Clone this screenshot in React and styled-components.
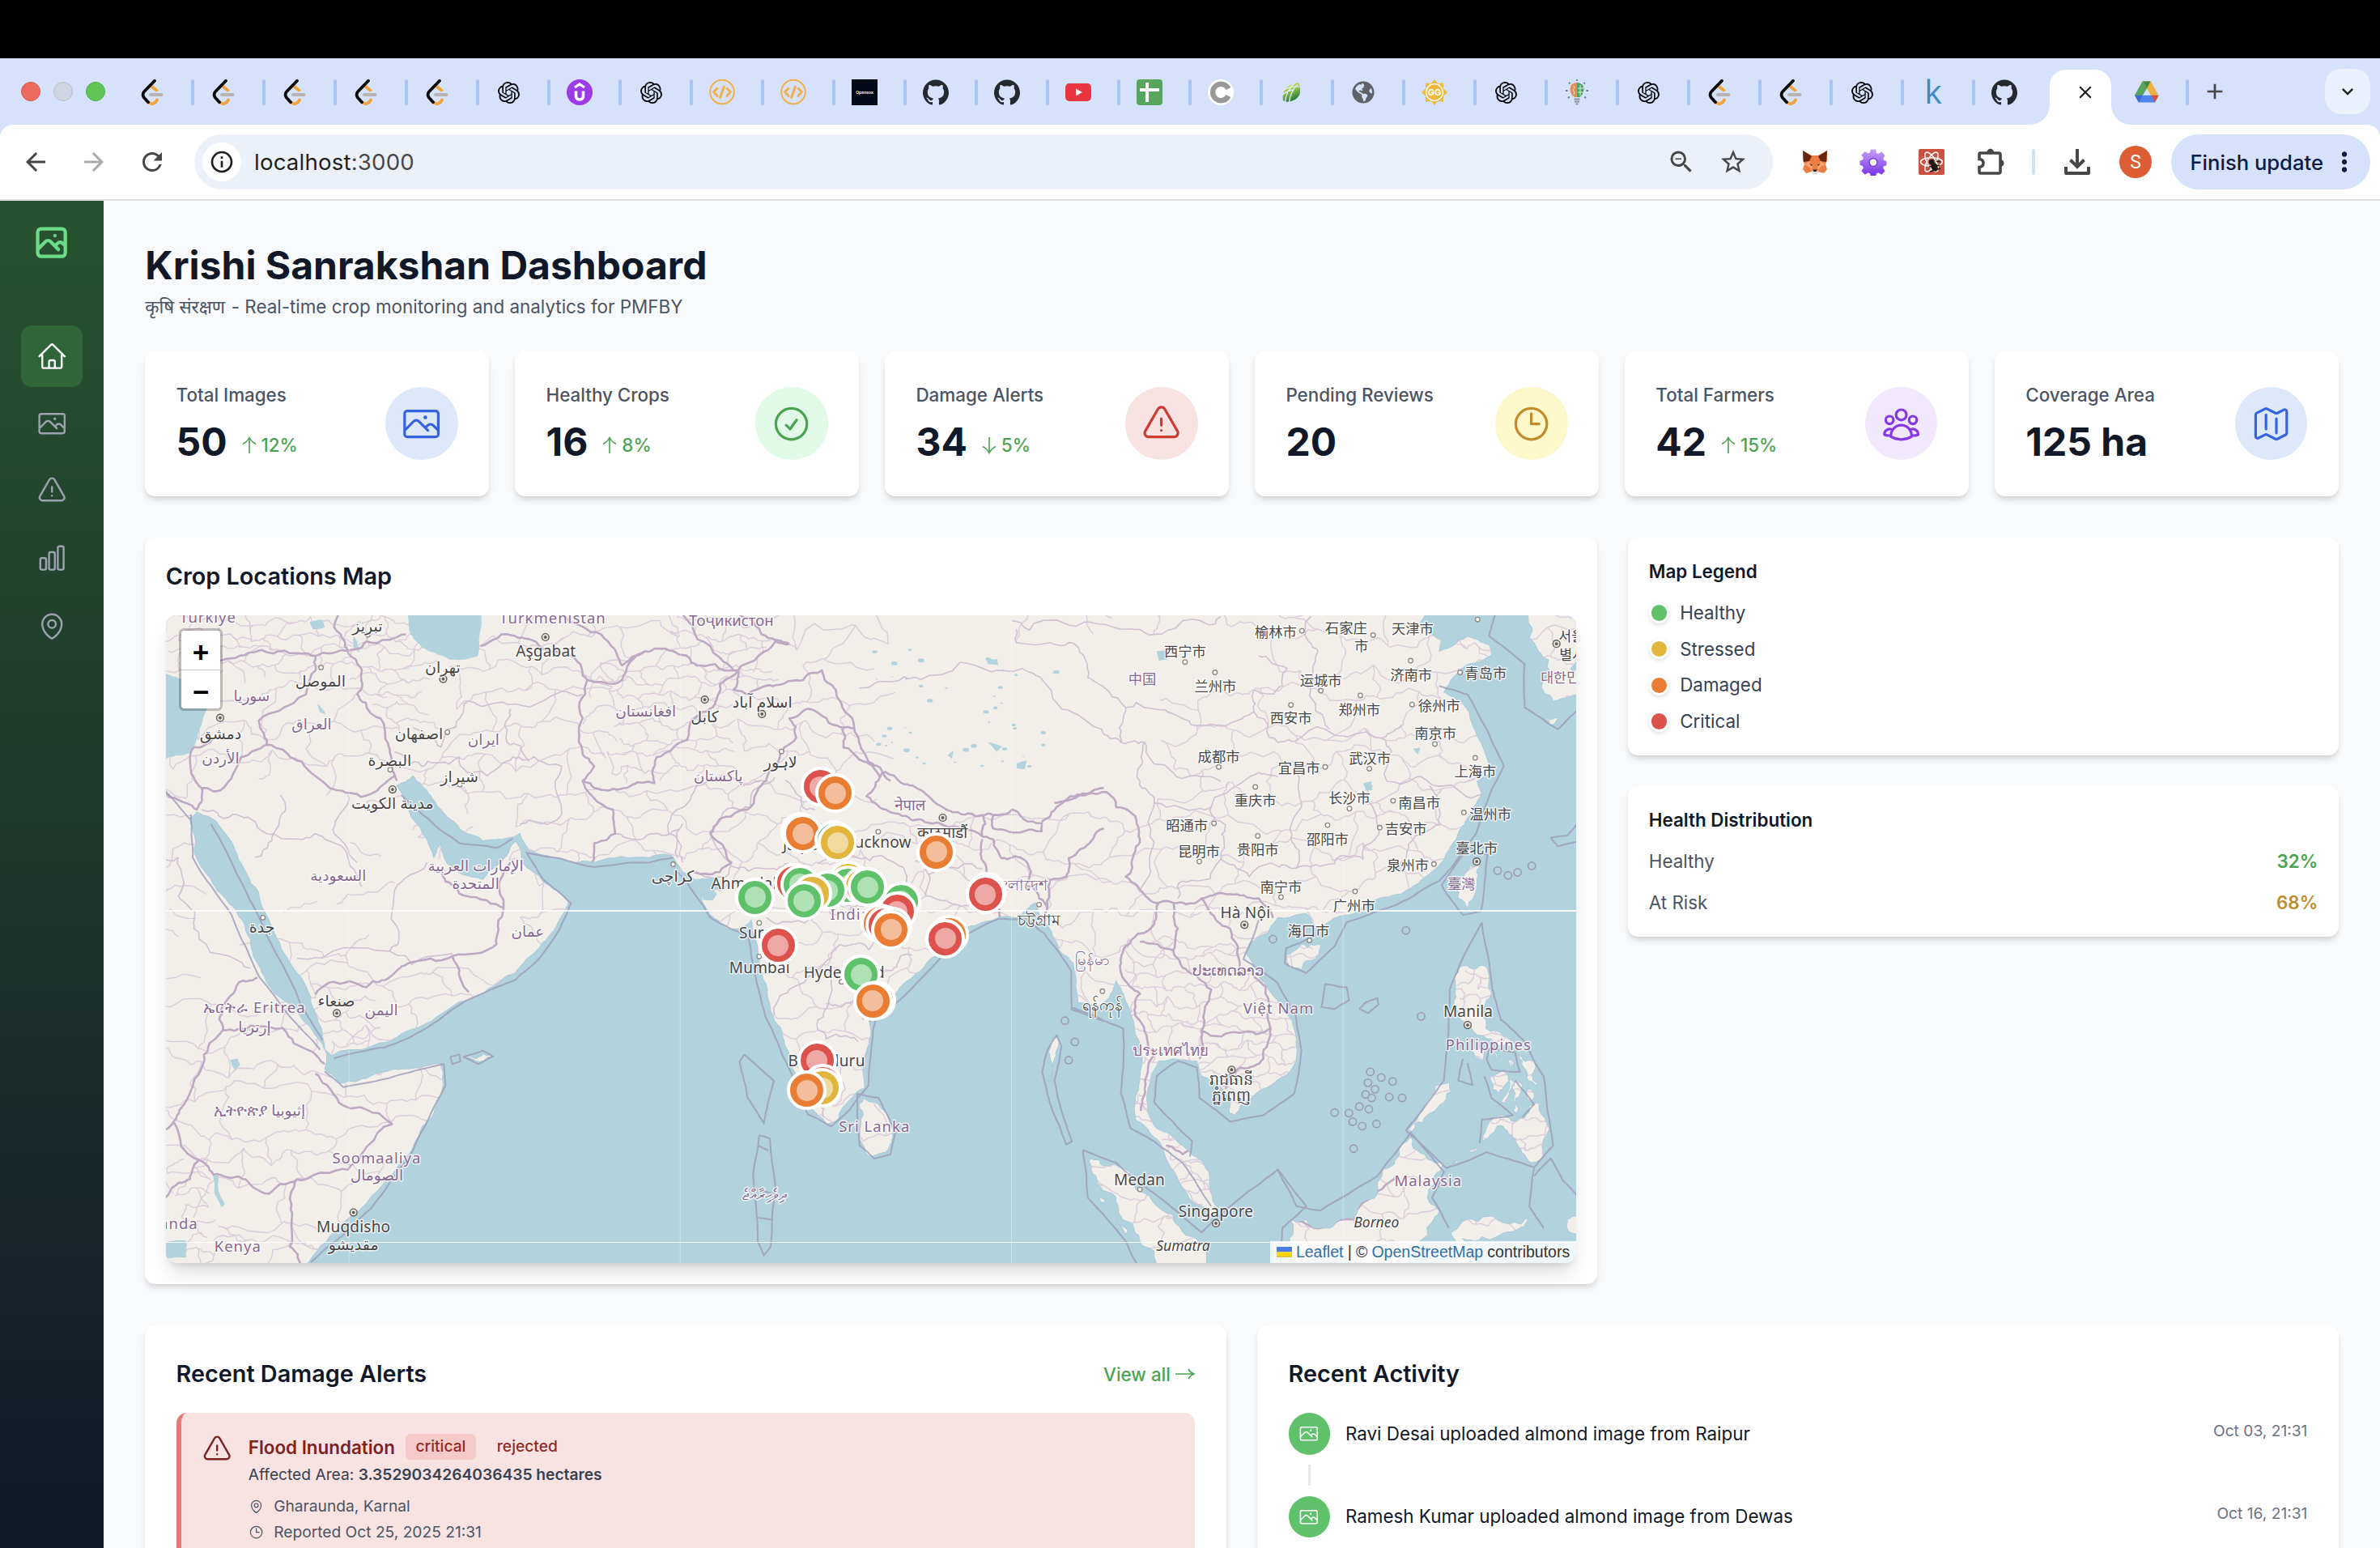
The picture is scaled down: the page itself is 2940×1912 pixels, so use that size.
import React from 'react';
import styled, { createGlobalStyle } from 'styled-components';
import {
  HiOutlinePhoto, HiOutlineHome, HiOutlineExclamationTriangle, HiOutlineChartBar, HiOutlineMapPin,
  HiOutlineCheckCircle, HiOutlineClock, HiOutlineUserGroup, HiOutlineMap,
} from 'react-icons/hi2';
import { SiOpenai, SiGithub } from 'react-icons/si';
import { FaGlobeAmericas } from 'react-icons/fa';
import {
  MdArrowBack, MdArrowForward, MdRefresh, MdInfoOutline, MdZoomOut, MdStarBorder,
  MdAdd, MdClose, MdMoreVert, MdExpandMore,
} from 'react-icons/md';

const Global = createGlobalStyle`
  html { font-size: 25.6px; }
  body { margin: 0; background: #000; overflow: hidden; font-family: Inter, 'Noto Sans', 'DejaVu Sans', sans-serif; }
  * { box-sizing: border-box; }
  h1, h2, h3, p { margin: 0; }
  svg { display: block; flex: none; }
`;

/* ---------- browser chrome ---------- */

const Screen = styled.div`
  width: 2940px; height: 1912px; overflow: hidden;
  display: flex; flex-direction: column; background: #000; padding-top: 72px;
`;
const TabStrip = styled.div`
  height: 82px; flex: none; background: #d6e1fb;
  display: flex; align-items: center; padding: 0 12px 0 26px;
`;
const Lights = styled.div`display: flex; gap: 16px; margin-right: 22px;`;
const Light = styled.span`
  width: 24px; height: 24px; border-radius: 50%;
  background: ${(p) => p.$fill}; border: 1px solid ${(p) => p.$edge};
`;
const Tab = styled.div`
  width: 88px; flex: none; padding-left: 20px;
  display: flex; align-items: center; justify-content: space-between; height: 84px; padding-top: 2px;
  margin-left: ${(p) => p.$ml || 0}px;
`;
const FavBox = styled.span`
  width: 32px; height: 32px; display: flex; align-items: center; justify-content: center;
`;
const TabSep = styled.span`width: 4px; height: 32px; border-radius: 2px; background: #a9c4f8;`;
const ActiveTab = styled.div`
  width: 76px; height: 68px; flex: none; align-self: flex-end; margin: 0 4px;
  background: #fff; border-radius: 20px 20px 0 0; position: relative;
  display: flex; align-items: flex-start; justify-content: center; padding: 15px 0 0 12px;
  &::before, &::after {
    content: ''; position: absolute; bottom: 0; width: 24px; height: 24px;
  }
  &::before { left: -24px; background: radial-gradient(circle at 0 0, transparent 23.5px, #fff 24px); }
  &::after { right: -24px; background: radial-gradient(circle at 100% 0, transparent 23.5px, #fff 24px); }
`;
const Fill = styled.span`flex: 1;`;
const TabMenu = styled.span`
  width: 56px; height: 56px; border-radius: 20px; background: #ebf1fc;
  display: flex; align-items: center; justify-content: center;
`;
const ToolbarBack = styled.div`background: #d6e1fb; flex: none;`;
const Toolbar = styled.div`
  height: 94px; background: #fff; border-bottom: 2px solid #dfe1e0; border-radius: 16px 16px 0 0;
  display: flex; align-items: center; padding: 0 12px 0 26px; color: #474747;
`;
const ToolIcon = styled.span`
  width: ${(p) => p.$w || 36}px; margin: 0 ${(p) => p.$gap || 0}px 0 ${(p) => p.$ml || 0}px; opacity: ${(p) => p.$o || 1};
  display: flex; align-items: center; justify-content: center; flex: none;
`;
const Omnibox = styled.div`
  width: 1950px; height: 68px; border-radius: 34px; background: #ecf1f9; margin-right: 36px; flex: none;
  display: flex; align-items: center; padding: 0 31px 0 10px;
`;
const SiteInfo = styled.span`
  width: 48px; height: 48px; border-radius: 50%; background: #fff; color: #1f1f1f; margin-right: 16px;
  display: flex; align-items: center; justify-content: center;
`;
const Url = styled.span`font-size: 27.6px; color: #1f1f1f; letter-spacing: 0.2px; span { color: #474747; }`;
const ToolSep = styled.span`width: 4px; height: 32px; border-radius: 2px; background: #d3e0fb; margin-right: 35px;`;
const Avatar = styled.span`
  width: 40px; height: 40px; border-radius: 50%; background: #de5e34; color: #fff; margin: 0 24px 0 1px;
  font: 400 23px Roboto, sans-serif; display: flex; align-items: center; justify-content: center; flex: none;
`;
const UpdatePill = styled.span`
  width: 246px; height: 68px; border-radius: 34px; background: #d6e1fb; color: #0c1b45; flex: none;
  display: flex; align-items: center; justify-content: space-between; padding: 0 13px 0 23.5px;
  font-size: 25.6px; font-weight: 500; letter-spacing: 0; white-space: nowrap;
`;

const Leet = () => (
  <svg width="32" height="32" viewBox="-1.5 0 32 32" fill="none" strokeLinecap="round">
    <path d="M14 9 L20 13.5" stroke="#f0a33a" strokeWidth="3.6" />
    <path d="M10.5 28.5 Q16 33 20.5 25.5" stroke="#f0a33a" strokeWidth="3.8" />
    <path d="M12.5 19 H26" stroke="#b6b3b3" strokeWidth="4" />
    <path d="M17.5 1.8 L4.5 15.2 Q1.6 19 4.5 22.8 L9.5 28.2" stroke="#0a0a0a" strokeWidth="3.8" strokeLinejoin="round" />
  </svg>
);
const Udemy = () => (
  <svg width="32" height="32" viewBox="0 0 32 32">
    <circle cx="16" cy="16" r="16" fill="#9b3ae6" />
    <path d="M10 10 L16 6 L22 10" fill="none" stroke="#fff" strokeWidth="3.2" />
    <path d="M11.5 14.5 V20 Q11.5 25 16 25 Q20.5 25 20.5 20 V14.5" fill="none" stroke="#fff" strokeWidth="3.6" />
  </svg>
);
const Code = () => (
  <svg width="32" height="32" viewBox="0 0 32 32" fill="none" stroke="#f1b04a" strokeLinecap="round" strokeLinejoin="round">
    <circle cx="16" cy="15.5" r="14.8" strokeWidth="2" />
    <path d="M10 11 L5.6 15.5 L10 20.5 M22 11 L26.4 15.5 L22 20.5 M18.4 9 L13.6 22.5" strokeWidth="3" />
  </svg>
);
const Opensox = styled.span`
  width: 32px; height: 32px; background: #050b16; color: #fff; font-size: 5px; font-weight: 600;
  display: flex; align-items: center; justify-content: center;
`;
const KaggleMark = styled.span`font: 500 41px/32px 'Open Sans', 'Noto Sans', sans-serif; color: #3f8abf; margin-top: -5px;`;
const Tube = () => (
  <svg width="32" height="32" viewBox="0 0 32 32"><rect y="5" width="32" height="22" rx="5" fill="#e93540" /><path d="M13 11.5 L21 16 L13 20.5Z" fill="#fff" /></svg>
);
const Sheets = () => (
  <svg width="32" height="32" viewBox="0 0 32 32"><rect width="32" height="32" rx="4" fill="#58a65c" /><path d="M13 4 V28 M4 13 H28" stroke="#fff" strokeWidth="4" /></svg>
);
const Ring = () => (
  <svg width="32" height="32" viewBox="0 0 32 32"><circle cx="16" cy="16" r="16" fill="#fff" /><path d="M25.5 11.5 A10.2 10.2 0 1 0 25.5 20.5" fill="none" stroke="#999" strokeWidth="6.4" /><path d="M20 16 H32" stroke="#fff" strokeWidth="3" /></svg>
);
const Leaf = () => (
  <svg width="32" height="32" viewBox="0 0 32 32">
    <defs><linearGradient id="leafFill" x1="0" y1="0" x2="0.4" y2="1"><stop offset="0" stopColor="#e8d34a" /><stop offset=".45" stopColor="#9fce4c" /><stop offset="1" stopColor="#1e7a34" /></linearGradient></defs>
    <path d="M5 26 Q2 8 24 4 Q31 22 15 27 Q8 29 5 26Z" fill="url(#leafFill)" />
    <path d="M7.5 28 Q9 13 20 4 M12.5 28 Q14 15 23 6 M4 14 Q14 8 25 9 M3 20 Q12 13 17 13" stroke="#e4ecf9" strokeWidth="1.3" fill="none" />
  </svg>
);
const Sun = () => (
  <svg width="32" height="32" viewBox="0 0 32 32">
    <path d="M16 0 L20 5 L27 4.5 L27 11.5 L32 16 L27 20.5 L27 27.5 L20 27 L16 32 L12 27 L5 27.5 L5 20.5 L0 16 L5 11.5 L5 4.5 L12 5Z" fill="#efb93c" />
    <circle cx="16" cy="16" r="10.4" fill="none" stroke="#fff" strokeWidth="1.4" />
    <text x="16" y="20" fontFamily="Inter, sans-serif" fontWeight="700" fontSize="11" textAnchor="middle" fill="#fff">GG</text>
  </svg>
);
const Bulb = () => (
  <svg width="32" height="32" viewBox="0 0 32 32">
    <path d="M16 4 Q6 5 8 15 Q9 20 13 22 H16Z" fill="#e98a55" /><path d="M16 4 Q26 5 24 15 Q23 20 19 22 H16Z" fill="#45a765" />
    <path d="M12 8 Q14 11 11 13 Q14 16 12 19 M20 7 V20 M17 11 H24 M17 16 H24" stroke="#f3e6dd" strokeWidth="1" fill="none" />
    <path d="M12.5 24.5 H19.5 M13 27.5 H19 M14.5 30.5 H17.5" stroke="#8d939b" strokeWidth="2.2" />
    <path d="M16 0 V2 M6 4 L7.5 5.5 M26 4 L24.5 5.5 M2 14 H4.5 M27.5 14 H30 M5 23 L6.8 21.5 M27 23 L25.2 21.5" stroke="#6d7c8c" strokeWidth="1.8" />
  </svg>
);
const Drive = () => (
  <svg width="32" height="32" viewBox="0 0 32 32">
    <path d="M10.5 2.5 H20.5 L15.5 12 L6 28 L1 19.5Z" fill="#58a65c" />
    <path d="M11.2 2.5 H20.8 L30.5 19.8 H20.8Z" fill="#edb041" />
    <path d="M11.2 2.5 H20.6 L16 11Z" fill="#3f8a48" />
    <path d="M1 19.8 H30.6 L26 28.5 H6Z" fill="#4f83ee" />
    <path d="M1 19.8 H10.8 L6 28.5Z" fill="#3d68cf" /><path d="M21.4 19.8 H30.6 L26 28.5Z" fill="#dc4f3f" />
  </svg>
);
const Fox = () => (
  <svg width="32" height="32" viewBox="0 0 32 32">
    <path d="M1 2 L12 8 H20 L31 2 L31 14 L29 19 L31 25 L27 30 L20 28 L17 30 H15 L12 28 L5 30 L1 25 L3 19 L1 14Z" fill="#ee7d43" />
    <path d="M1 2 L12 9 L9 15 L2 16Z M31 2 L20 9 L23 15 L30 16Z" fill="#66250c" />
    <path d="M3 19 L9 15 L13 22 L12 28 L10 23Z M29 19 L23 15 L19 22 L20 28 L22 23Z" fill="#f4a473" />
    <path d="M9 18 L13 19.5 L12 21Z M23 18 L19 19.5 L20 21Z" fill="#5b2a17" />
    <path d="M12 27 H20 L19 31 H13Z" fill="#e6dcd6" /><path d="M13.5 25.5 H18.5 L17.5 28 H14.5Z" fill="#222" />
  </svg>
);
const Gear = () => (
  <svg width="34" height="34" viewBox="0 0 32 32">
    <defs><linearGradient id="gearFill" gradientUnits="userSpaceOnUse" x1="0" y1="1" x2="0" y2="31"><stop offset="0" stopColor="#c4a2f6" /><stop offset="1" stopColor="#7c35e8" /></linearGradient></defs>
    <path
      d="M13 1.5h6l.8 4.2 2.2.9 3.6-2.4 4.2 4.2-2.4 3.6.9 2.2 3.2.8v5l-3.2.8-.9 2.2 2.4 3.6-4.2 4.2-3.6-2.4-2.2.9-.8 3.2h-6l-.8-3.2-2.2-.9-3.6 2.4-4.2-4.2 2.4-3.6-.9-2.2L.5 19.500v-5l3.200-.8.9-2.200-2.400-3.600 4.200-4.200 3.600 2.400 2.200-.9z"
      fill="url(#gearFill)" strokeLinejoin="round"
    />
    <circle cx="16" cy="16.500" r="4.6" fill="#fff" stroke="#7a3be0" strokeWidth="1.4" />
  </svg>
);
const ReactTool = () => (
  <svg width="32" height="32" viewBox="0 0 32 32">
    <rect width="32" height="32" rx="2" fill="#c95340" />
    {[0, 60, 120].map((r) => <ellipse key={r} cx="16" cy="16" rx="13.5" ry="5.2" fill="none" stroke="#fff" strokeWidth="1.5" transform={`rotate(${r} 16 16)`} />)}
    <circle cx="16" cy="16" r="3.2" fill="#1f1a18" /><ellipse cx="19.5" cy="22" rx="4" ry="6" fill="#1f1a18" transform="rotate(-25 19.5 22)" />
    <path d="M13 22 L26 20 M14 28 L27 24 M22 15 L27 16" stroke="#1f1a18" strokeWidth="1.6" />
  </svg>
);
const Download = () => (
  <svg width="34" height="34" viewBox="0 0 34 34" fill="none" stroke="#474747" strokeWidth="4">
    <path d="M17 1 V22 M8.5 14.5 L17 23 L25.5 14.5" /><path d="M3 23 V31 H31 V23" strokeLinejoin="round" />
  </svg>
);
const Puzzle = () => (
  <svg width="34" height="34" viewBox="0 0 34 34">
    <path d="M4 6 H27 Q29 6 29 8 V29 Q29 31 27 31 H4 Q3 31 3 29 V23.5 Q8 23 8 18.5 Q8 14 3 13.5 V8 Q3 6 4 6Z" fill="none" stroke="#474747" strokeWidth="3.6" />
    <path d="M12.5 5 A4.2 4.2 0 0 1 21 5Z M29 14 A4.2 4.2 0 0 1 29 23Z" fill="#474747" />
  </svg>
);

const FAVS = {
  leet: <Leet />, ai: <SiOpenai size={27} color="#000" />, udemy: <Udemy />, code: <Code />, sox: <Opensox>Opensox</Opensox>,
  git: <SiGithub size={32} color="#24292f" />, tube: <Tube />, sheets: <Sheets />, ring: <Ring />, leaf: <Leaf />,
  globe: <FaGlobeAmericas size={28} color="#5f6368" />, sun: <Sun />, bulb: <Bulb />, k: <KaggleMark>k</KaggleMark>,
};
const TABS = ('leet leet leet leet leet ai udemy ai code code sox git git tube sheets ring leaf globe sun ai bulb ai leet leet ai k git').split(' ');

const Browser = () => (
  <>
    <TabStrip>
      <Lights>
        <Light $fill="#ec6a5e" $edge="#d9594e" /><Light $fill="#cfd5e2" $edge="#b9bfcd" /><Light $fill="#61c554" $edge="#50b045" />
      </Lights>
      {TABS.map((t, i) => (
        <Tab key={i}><FavBox>{FAVS[t]}</FavBox>{i < TABS.length - 1 && <TabSep />}</Tab>
      ))}
      <ActiveTab><MdClose size={26} color="#1f1f1f" /></ActiveTab>
      <Tab $ml={4}><FavBox><Drive /></FavBox><TabSep /></Tab>
      <ToolIcon $w={56} $ml={4}><MdAdd size={32} color="#474747" /></ToolIcon>
      <Fill />
      <TabMenu><MdExpandMore size={28} color="#1f1f1f" /></TabMenu>
    </TabStrip>
    <ToolbarBack>
      <Toolbar>
        <ToolIcon $gap={36}><MdArrowBack size={36} /></ToolIcon>
        <ToolIcon $gap={36} $o={0.45}><MdArrowForward size={36} /></ToolIcon>
        <ToolIcon $gap={34}><MdRefresh size={36} /></ToolIcon>
        <Omnibox>
          <SiteInfo><MdInfoOutline size={32} /></SiteInfo>
          <Url>localhost<span>:3000</span></Url>
          <Fill />
          <ToolIcon $gap={28}><MdZoomOut size={36} /></ToolIcon>
          <ToolIcon><MdStarBorder size={36} /></ToolIcon>
        </Omnibox>
        <ToolIcon $w={32} $gap={40}><Fox /></ToolIcon>
        <ToolIcon $w={32} $gap={40}><Gear /></ToolIcon>
        <ToolIcon $w={32} $gap={40}><ReactTool /></ToolIcon>
        <ToolIcon $w={34} $gap={34}><Puzzle /></ToolIcon>
        <ToolSep />
        <ToolIcon $w={34} $gap={34}><Download /></ToolIcon>
        <Avatar>S</Avatar>
        <UpdatePill>Finish update<MdMoreVert size={38} /></UpdatePill>
      </Toolbar>
    </ToolbarBack>
  </>
);

/* ---------- map drawing ---------- */

const nums = (s) => {
  const n = s.trim().split(/[\s,]+/).map(Number);
  const out = [];
  for (let i = 0; i < n.length; i += 2) out.push([n[i], n[i + 1]]);
  return out;
};
const frame = (ox, oy, kx, ky) => (s) => nums(s).map(([x, y]) => [ox + x / kx, oy + y / ky]);
const W = frame(200, 650, 1.7422, 1.686);
const S = frame(860, 900, 3, 3);
const E = frame(1050, 740, 1.7043, 1.8667);

let seed = 7;
const rnd = () => {
  seed = (seed * 16807) % 2147483647;
  return seed / 2147483647 - 0.5;
};
const rough = (pts, amp) => {
  let cur = pts;
  for (let pass = 0; pass < 3; pass += 1) {
    const next = [cur[0]];
    for (let i = 1; i < cur.length; i += 1) {
      const [ax, ay] = cur[i - 1];
      const [bx, by] = cur[i];
      const len = Math.hypot(bx - ax, by - ay);
      if (len > 6) next.push([(ax + bx) / 2 + rnd() * len * amp, (ay + by) / 2 + rnd() * len * amp]);
      next.push(cur[i]);
    }
    cur = next;
  }
  return cur;
};
const d = (pts, close) => `M${pts.map(([x, y]) => `${x.toFixed(1)} ${y.toFixed(1)}`).join('L')}${close ? 'Z' : ''}`;
const area = (pts, amp = 0.3) => d(rough([...pts, pts[0]], amp), true);
const line = (pts, amp = 0.28) => d(rough(pts, amp));

const MAINLAND = [
  ...W('-90,1300 -90,1000 -90,700 -90,400 -90,60 300,60 700,60 1100,60'),
  ...E('0,-120 400,-120 800,-120 1100,-60 1215,20 1200,55 1215,75 1245,95 1240,120 1265,110 1300,85 1345,105 1350,130 1300,150 1270,180 1250,215 1290,240 1310,290 1330,335 1340,365 1350,400 1320,420 1330,450 1310,490 1285,530 1260,580 1235,620 1200,650 1160,680 1100,695 1060,725 1020,735 985,765 960,725 900,735 880,770 840,795 835,820 860,870 900,925 930,970 940,1050 925,1090 880,1125 845,1150 810,1190 798,1185 800,1150 760,1110 740,1100 730,1065 680,1060 650,1065 640,1085 630,1120 625,1180 645,1220 680,1240 710,1270 735,1290 755,1320 758,1360 775,1410 765,1422 720,1390 690,1340 665,1290 650,1250 620,1215 600,1200 600,1150 610,1110 615,1060 600,1000 590,950 575,910 560,880 545,920 520,940 480,930 475,890 470,840 440,810 420,760 400,735 390,700 350,735 310,735 250,755 210,800 150,855 110,890 90,920 60,935 40,970 40,1030 25,1070'),
  ...W('1520,1080 1512,1170 1480,1195 1455,1235 1430,1245 1400,1215 1370,1150 1340,1080 1310,1010 1290,930 1280,870 1268,820 1240,838 1215,838 1180,810 1160,770 1200,755 1190,735 1145,735 1120,720 1095,685 1050,690 930,700 850,690 790,675 770,640 740,650 690,655 640,630 600,590 570,550 540,520 505,540 530,590 560,640 585,690 600,660 612,700 640,722 690,735 730,700 760,655 770,670 775,700 820,740 875,780 850,830 810,880 760,930 700,965 640,990 560,1040 480,1075 400,1090 365,1103 350,1090 340,1040 320,980 270,900 230,820 180,720 120,620 75,595 60,610 70,680 120,760 160,800 190,860 215,930 240,970 290,1010 330,1060 355,1100 350,1130 385,1160 440,1150 520,1130 600,1118 605,1160 560,1250 510,1330 440,1410 360,1480 305,1540 290,1600 100,1650 -90,1600'),
];
const ISLANDS = [
  E('30,1150 60,1165 80,1195 90,1240 75,1275 45,1285 28,1260 22,1200'),
  E('920,820 950,795 990,795 980,830 950,855 925,850'),
  E('1305,615 1325,612 1320,645 1297,715 1280,690 1285,645'),
  E('1420,20 1545,20 1545,225 1480,235 1455,205 1470,140 1430,90'),
  E('1460,275 1490,275 1475,290'),
  E('1290,845 1335,845 1345,870 1350,910 1330,960 1338,990 1370,1000 1400,1025 1370,1030 1320,1005 1285,970 1275,900'),
  E('1402,1050 1440,1066 1447,1125 1428,1110 1418,1080'), E('1345,1100 1378,1085 1388,1110 1366,1140 1352,1130'), E('1385,1105 1398,1120 1380,1165 1370,1160'),
  E('1405,1110 1415,1120 1403,1185 1396,1180'), E('1310,1035 1338,1038 1332,1066 1315,1055'), E('1352,1042 1362,1050 1356,1066'), E('1385,1062 1398,1068 1388,1080'), E('1425,1130 1440,1136 1432,1160'),
  E('1400,1205 1420,1195 1450,1160 1472,1220 1460,1280 1430,1298 1412,1270 1395,1240 1362,1215 1345,1240 1332,1250 1345,1205 1375,1190'),
  E('1175,1222 1205,1180 1262,1115 1265,1135 1215,1190 1182,1228'), E('1300,1270 1322,1262 1312,1275'), E('1255,1300 1285,1290 1262,1306'),
  E('925,1430 960,1430 1010,1450 1060,1430 1110,1370 1120,1320 1150,1290 1180,1240 1210,1280 1250,1300 1230,1330 1215,1380 1240,1410 1200,1480 1180,1545 940,1545 925,1480'),
  E('505,1290 560,1305 620,1370 680,1420 720,1470 745,1545 650,1545 610,1480 560,1380 520,1340'),
  E('1265,1460 1300,1430 1390,1440 1425,1425 1400,1455 1330,1470 1290,1475 1300,1545 1270,1545'),
  E('1510,1430 1545,1390 1545,1470 1515,1460'), E('560,1435 585,1455 580,1465'), E('525,1378 538,1388 530,1392'),
  E('427,1010 437,1012 430,1060 424,1110 417,1112 420,1050'),
  W('650,1105 690,1098 710,1105 680,1115'),
];
const LAKES = [
  W('525,170 535,225 570,258 620,278 680,270 685,170'),
  W('-40,300 0,304 42,318 104,362 82,420 62,472 0,488 -40,490'),
  W('110,1350 122,1352 122,1385 135,1412 128,1418 112,1385'),
  W('146,1112 162,1108 168,1122 156,1132'), W('0,1490 52,1488 52,1522 0,1525'),
  W('318,200 345,195 350,210 325,215'), W('335,370 345,380 352,392 340,388'), W('412,228 420,240 425,262 414,255'),
  E('645,120 665,118 668,140 650,142'), E('288,140 310,138 312,152 290,150'), E('350,378 372,372 368,392 350,390'),
  E('290,330 320,340 308,352'), E('205,360 218,350 214,368'), E('1080,425 1098,420 1100,440 1085,442'), E('1185,345 1200,342 1195,358'),
  W('1150,755 1180,752 1195,765 1185,780 1165,778'),
];
const BORDERS = [
  W('0,545 75,590 85,545 60,480 70,460 110,440'), W('85,545 125,550 170,480 225,455 300,490 395,555 450,557 500,520'),
  W('225,455 208,405 310,350 330,270'), W('100,290 150,275 240,265 300,265 330,270 400,260'),
  W('400,260 430,300 420,350 470,400 490,470 505,530'), W('400,260 370,210 380,180'), W('400,260 440,240 525,225'),
  W('685,250 730,225 790,235 880,270 915,320 905,400 905,475 930,500 905,530 970,590 975,640 930,660 925,700'),
  W('915,320 990,320 1040,260 1100,260 1150,290 1240,300 1320,240 1350,245'),
  W('905,530 930,545 1000,545 1060,535 1065,480 1130,445 1145,400 1190,370 1200,330 1240,300'),
  W('1145,720 1200,720 1225,700 1180,640 1200,610 1260,590 1300,530 1340,460 1365,440 1350,400 1390,380 1430,400 1490,420'),
  W('1240,300 1230,340 1260,350 1330,330 1380,320 1420,300 1450,340 1490,420 1500,450 1520,490 1568,530'),
  W('330,975 360,950 440,960 480,945 530,910 625,895 720,870 735,795 700,780 640,765 610,740 600,720'),
  W('625,895 660,970'), W('735,795 735,720 750,700'), W('205,940 165,950 130,1000 130,1050 190,1040 260,1045 330,1100 350,1120'),
  W('330,1140 380,1200 495,1245 400,1340 290,1360 275,1400 275,1500 300,1540'),
  W('130,1050 90,1100 60,1180 25,1240 80,1320 110,1350 180,1360 230,1390 290,1360'),
  W('860,180 960,240 990,290 1040,260'), W('1120,180 1180,250 1230,300'), W('1350,245 1290,225 1240,180'),
  W('80,1320 60,1360 20,1380 0,1400'), W('0,1260 25,1240'),
  S('540,0 545,70 640,130 680,180 630,250 720,310 800,340 900,350 1060,400 1060,320 950,310 880,270 800,210 700,160 680,180'),
  S('1060,320 1100,320 1120,320 1170,300 1280,350 1280,380 1180,385 1100,370 1100,320'), S('1280,345 1350,280 1430,240 1510,220'),
  S('1060,400 1100,410 1130,480 1220,490 1240,530 1220,580 1260,600 1300,670 1290,730'), S('1060,410 1070,500 1090,560 1110,640 1125,700'),
  S('1510,370 1440,440 1380,480 1370,550 1310,560 1300,670'),
  E('430,470 480,450 540,445 560,480 600,500 610,560 580,640 610,670 650,700 680,700'),
  E('650,700 640,750 580,800 570,860 610,910 600,960 640,1050 620,1130 612,1180'),
  E('680,700 740,690 800,680 860,690 890,735'), E('740,690 770,740 800,760 820,850 880,920 885,990 820,1000 740,995'),
  E('610,790 680,810 700,850 760,900 740,995 735,1060'), E('885,990 870,1060 820,1080 790,1130'), E('680,700 690,760 680,810'),
  E('945,1435 990,1450 1060,1430 1120,1360 1150,1330'), E('665,1260 700,1280 715,1270'),
];
const PROVINCES = [
  E('350,70 350,100 460,100 500,180 580,250 690,270 770,290 850,260'), E('20,205 60,190 150,185 280,160 400,180 530,300 570,330 580,250'),
  E('340,50 460,60 600,70 700,50 780,40'), E('620,330 610,420 640,470 760,480 860,400 900,410'), E('570,330 620,330 680,400 780,420'),
  E('850,260 900,330 1000,300 1120,320 1160,290'), E('860,130 920,160 910,200 850,210 850,260'), E('970,40 985,120 970,200 1010,300'),
  E('760,480 790,520 780,600 840,640 940,620'), E('940,400 950,480 930,560 940,620 1020,610 1060,590'), E('1100,430 1110,520 1080,600 1060,590'),
  E('1120,320 1130,420 1230,430 1330,450'), E('1220,430 1240,520 1180,560 1160,620'), E('640,470 640,560 610,670'), E('780,600 700,650 690,690'),
  W('500,470 560,500 640,480 700,520 740,490 800,480 860,500 860,600 770,620'), W('750,380 740,440 790,490'), W('540,420 600,460 650,370 760,370 905,350'),
  W('1120,700 1090,640 1140,560 1200,520 1290,530'), W('975,640 1060,640 1120,620 1110,690'),
  W('85,590 160,600 240,640 330,640 400,690 430,750'), W('255,560 240,640 200,690'), W('400,560 370,640 420,700'), W('290,900 490,885 625,890'), W('490,885 500,760 570,700'),
  W('0,690 35,690 35,770 65,800'), W('70,800 80,860 190,920'),
  S('0,535 120,540 130,500 50,380 100,310 200,290 290,180'), S('130,510 260,520 330,500 400,520'), S('330,190 370,240 410,300 440,300'),
  S('450,500 600,480 680,470 770,520 780,600'), S('810,490 860,540 1000,500 1060,520'), S('860,540 850,620 960,650 1040,640'),
  S('260,700 400,720 440,690 520,690 620,660'), S('530,800 640,820 660,780'), S('530,800 500,850 400,940 310,990 290,1060'), S('500,930 490,1020 450,1080 480,1150 600,1160'),
  S('480,1020 580,1010 620,1080'), S('330,1200 400,1230 440,1290 470,1440'), S('690,910 760,840 800,840'),
];
const SEA = [
  W('1110,720 1180,815 1262,855 1275,930 1298,1020 1350,1130 1390,1225 1440,1250 1480,1215 1520,1165 1530,1050 1545,1000'),
  S('640,1085 760,1000 900,855 1000,762 1120,705 1220,705 1290,760 1390,900 1390,1040 1510,1085'),
  E('465,940 575,990 570,1140 590,1220 640,1250 700,1300 760,1400'),
  E('860,740 828,830 900,885 938,960 950,1040 935,1140 870,1190 800,1205 735,1150 730,1080 690,1065 645,1100 640,1160 720,1250 715,1285'),
  E('1240,200 1300,220 1340,300 1376,385 1340,470 1318,540 1240,650 1150,705 1045,745 1020,800 960,862 915,840 918,805 980,775'),
  E('1300,570 1342,590 1328,720 1290,728 1245,660 1300,570'),
  E('1330,745 1352,900 1370,970 1420,1020 1460,1100 1480,1260 1440,1310 1340,1275 1255,1312 1170,1225 1250,1110 1262,900 1330,745'),
  E('490,1270 560,1300 640,1370 740,1460 800,1400 900,1315 940,1400 990,1410 1110,1330 1180,1230 1250,1320 1225,1380 1260,1450'),
  E('490,1270 500,1380 580,1480 610,1545'), E('1360,20 1345,85 1420,150 1420,250 1490,300 1545,240'), E('1440,1310 1430,1400 1460,1450'),
  E('1440,1330 1475,1290 1500,1340 1545,1390'), E('900,1315 960,1400 910,1450 905,1545'),
  W('370,1108 480,1085 560,1050 650,990 760,945 812,900 855,840 880,785 820,735 785,680 930,710 1050,700 1100,690'),
  W('350,1135 390,1168 520,1140 606,1120 610,1165 540,1300 450,1420 320,1533'), W('62,600 66,690 150,810 210,940 340,1090'),
  W('105,620 170,740 240,880 300,1000 345,1070'), W('515,560 560,600 640,660 720,670 755,650'), W('0,545 60,610'),
  W('1253,1100 1317,1155 1295,1243 1260,1190 1243,1115 1253,1100'),
  W('1285,1268 1308,1275 1320,1380 1310,1500 1295,1518 1282,1490 1272,1350 1285,1268'), W('1283,1290 1305,1300'), W('1275,1380 1318,1390'), W('1283,1440 1315,1445'),
  E('435,1005 445,1030 430,1110 445,1180 467,1250 455,1258 420,1160 404,1090 415,1040 435,1005'),
  E('1000,887 1045,895 1050,925 1020,945 992,940 1000,887'), E('1072,945 1085,930 1110,920 1112,935 1090,955 1072,945'),
  E('15,1140 60,1150 95,1230 85,1280 50,1290 20,1260 15,1180 15,1140'), E('1475,550 1510,545 1529,520'), E('1475,550 1490,570 1529,560'),
  W('620,1105 640,1100 642,1115 625,1120 620,1105'), W('648,1105 690,1092 712,1104 680,1120 648,1105'),
  E('1345,1035 1400,1045 1410,1090 1350,1085 1340,1060 1345,1035'), E('1335,1100 1350,1150 1395,1190 1330,1200 1325,1255'), E('1400,1110 1440,1165 1415,1195'), E('1290,1060 1280,1110 1310,1120 1300,1070'),
];
const ATOLLS = [
  [1095, 1090], [1118, 1103], [1142, 1112], [1090, 1115], [1105, 1130], [1085, 1142], [1098, 1150], [1135, 1148], [1162, 1150], [1072, 1170],
  [1092, 1176], [1050, 1185], [1020, 1184], [1058, 1205], [1078, 1215], [1108, 1210], [1060, 1267], [1202, 962], [1170, 764], [890, 784],
  [452, 972], [473, 1021], [460, 1063], [1363, 626], [1385, 637], [1405, 630], [1435, 615],
].map(([x, y]) => E(`${x},${y}`)[0]);

const meshPath = (step, keep) => {
  const v = (i, j) => {
    const h = Math.abs(Math.sin(i * 127.1 + j * 311.7) * 43758.5);
    const g = Math.abs(Math.sin(i * 269.5 + j * 183.3) * 24634.6);
    return [200 + i * step + ((h % 1) - 0.5) * step * 0.85 + (j % 2) * 10, 750 + j * step * 0.86 + ((g % 1) - 0.5) * step * 0.7];
  };
  let out = '';
  for (let i = 0; i < 1760 / step; i += 1) {
    for (let j = 0; j < 950 / step; j += 1) {
      const a = v(i, j);
      if (keep(a)) {
        out += line([a, v(i + 1, j)], 0.45);
        if ((i + j) % 2 === 0) out += line([a, v(i, j + 1)], 0.45);
      }
    }
  }
  return out;
};
const inside = (boxes) => ([x, y]) => boxes.some(([l, t, r, b]) => x > l && x < r && y > t && y < b);
const tibet = inside([[1060, 750, 1400, 1000], [440, 1000, 620, 1200], [1390, 760, 1520, 860], [215, 960, 420, 1120], [205, 1130, 290, 1230]]);
const dense = inside([[205, 755, 500, 830], [450, 755, 520, 900], [740, 810, 900, 960], [820, 755, 940, 850], [1385, 1160, 1620, 1400], [380, 1210, 450, 1290], [205, 1440, 245, 1560], [1440, 1400, 1520, 1520], [1800, 1180, 1930, 1440], [500, 1010, 560, 1060]]);

const MAP = {
  land: [area(MAINLAND, 0.16), ...ISLANDS.map((p) => area(p, 0.4))].join(''),
  lakes: LAKES.map((p) => area(p, 0.15)).join(''),
  borders: BORDERS.map((p) => line(p)).join(''),
  provinces: PROVINCES.map((p) => line(p, 0.4)).join(''),
  sea: SEA.map((p) => line(p, 0.05)).join(''),
  mesh: meshPath(44, (p) => !tibet(p) && !dense(p)) + meshPath(21, dense),
};
const PONDS = Array.from({ length: 46 }, () => [1080 + (rnd() + 0.5) * 230, 800 + (rnd() + 0.5) * 150, 1 + (rnd() + 0.5) * 3]);

const CITY = 'c';
const LAND = 'p';
const LABELS = [
  [W, LAND, 'Türkiye', 99, 190], [W, CITY, 'تبريز', 442, 208], [W, LAND, 'Türkmenistan', 841, 192], [W, CITY, 'Aşgabat', 826, 260], [W, LAND, 'Тоҷикистон', 1225, 196],
  [W, CITY, 'تهران', 604, 294], [W, CITY, 'الموصل', 341, 323], [W, LAND, 'سوريا', 193, 354], [W, LAND, 'العراق', 322, 412], [W, CITY, 'دمشق', 126, 432],
  [W, LAND, 'الأردن', 126, 483], [W, CITY, 'اصفهان', 553, 432], [W, LAND, 'ایران', 692, 445], [W, CITY, 'البصرة', 490, 488], [W, CITY, 'شیراز', 640, 521],
  [W, CITY, 'مدينة الكويت', 496, 578], [W, LAND, 'افغانستان', 1041, 386], [W, CITY, 'كابل', 1168, 397], [W, CITY, 'اسلام آباد', 1292, 367], [W, CITY, 'لاہور', 1331, 492],
  [W, LAND, 'پاکستان', 1197, 520], [W, LAND, 'السعودية', 379, 728], [W, LAND, 'الإمارات العربية', 675, 708], [W, LAND, 'المتحدة', 675, 744], [W, CITY, 'کراچی', 1099, 730],
  [W, CITY, 'جدة', 215, 836], [W, LAND, 'عمان', 787, 844], [W, CITY, 'صنعاء', 375, 989], [W, LAND, 'اليمن', 472, 1007], [W, LAND, 'ኤርትራ Eritrea', 199, 1003], [W, LAND, 'إرتريا', 199, 1042],
  [W, LAND, 'ኢትዮጵያ إثيوبيا', 210, 1216], [W, LAND, 'Soomaaliya', 462, 1316], [W, LAND, 'الصومال', 462, 1352], [W, CITY, 'Muqdisho', 412, 1459], [W, CITY, 'مقديشو', 412, 1497],
  [W, LAND, 'Kenya', 163, 1499], [W, LAND, 'anda', 36, 1452], [W, LAND, 'ދިވެހިރާއްޖެ', 1296, 1392], [W, CITY, 'Ahmedabad', 1278, 745], [W, CITY, 'Surat', 1284, 848],
  [W, CITY, 'Mumbai', 1286, 919], [W, CITY, 'Hyderabad', 1468, 930], [W, CITY, 'Bengaluru', 1430, 1114], [S, LAND, 'India', 570, 688], [S, CITY, 'Jaipur', 400, 430],
  [S, CITY, 'Lucknow', 676, 422], [S, LAND, 'Sri Lanka', 660, 1476], [S, LAND, 'नेपाल', 792, 284], [S, CITY, 'काठमाडौं', 912, 386], [S, LAND, 'বাংলাদেশ', 1190, 580], [S, CITY, 'চট্টগ্রাম', 1270, 710],
  [E, LAND, 'မြန်မာ', 510, 832], [E, CITY, 'ရန်ကုန်', 531, 936], [E, LAND, 'ປະເທດລາວ', 796, 856], [E, LAND, 'ประเทศไทย', 675, 1040], [E, LAND, 'Việt Nam', 902, 943], [E, CITY, 'Hà Nội', 832, 723],
  [E, CITY, 'រាជធានី', 803, 1107], [E, CITY, 'ភ្នំពេញ', 803, 1146], [E, CITY, 'Manila', 1301, 952], [E, LAND, 'Philippines', 1344, 1027], [E, LAND, 'Malaysia', 1217, 1341],
  [E, CITY, 'Medan', 609, 1339], [E, CITY, 'Singapore', 770, 1412], [E, 'i', 'Sumatra', 701, 1490], [E, 'i', 'Borneo', 1108, 1436],
  [E, LAND, '中国', 615, 184], [E, CITY, '西宁市', 705, 121], [E, CITY, '兰州市', 769, 200], [E, CITY, '榆林市', 896, 76], [E, CITY, '石家庄', 1044, 66], [E, CITY, '市', 1076, 108], [E, CITY, '天津市', 1184, 69],
  [E, CITY, '运城市', 991, 188], [E, CITY, '济南市', 1181, 174], [E, CITY, '青岛市', 1338, 171], [E, CITY, '西安市', 928, 274], [E, CITY, '郑州市', 1072, 254], [E, CITY, '徐州市', 1240, 246], [E, CITY, '南京市', 1232, 309],
  [E, CITY, '成都市', 776, 364], [E, CITY, '宜昌市', 945, 390], [E, CITY, '武汉市', 1094, 367], [E, CITY, '上海市', 1316, 397], [E, CITY, '重庆市', 853, 463], [E, CITY, '长沙市', 1051, 459], [E, CITY, '南昌市', 1198, 469],
  [E, CITY, '温州市', 1348, 495], [E, CITY, '昭通市', 709, 521], [E, CITY, '吉安市', 1170, 530], [E, CITY, '邵阳市', 1005, 553], [E, CITY, '昆明市', 734, 581], [E, CITY, '贵阳市', 858, 577], [E, CITY, '泉州市', 1174, 613],
  [E, CITY, '臺北市', 1319, 574], [E, LAND, '臺灣', 1287, 657], [E, CITY, '南宁市', 907, 664], [E, CITY, '广州市', 1061, 706], [E, CITY, '海口市', 965, 764], [E, LAND, '대한민국', 1508, 181], [E, CITY, '서울특', 1532, 85], [E, CITY, '별시', 1520, 127],
];
const DOTS = [
  ...W('443,226 342,294 614,429 491,507 641,538 1333,469 1100,704 217,815 1285,826 1285,896'),
  ...S('674,382 1270,652 538,938'),
  ...E('705,145 768,169 951,73 1101,83 991,211 1180,142 1284,169 928,244 1074,222 1183,243 1231,334 776,387 1000,387 1093,391 1316,366 853,433 1051,483 1143,465 1292,492 766,517 1115,527 1005,521 735,605 858,546 1229,611 907,687 1063,674 967,787 531,904 610,1361 1321,47'),
];
const CAPITALS = [
  ...W('825,231 605,318 125,399 496,548 1168,361 1291,391 376,1014 412,1429'), ...S('913,330'), ...E('1487,103 1319,605 830,751 803,1085 1300,982 770,1439'),
];
const LABEL_STYLE = { c: { fill: '#484646', size: 19, space: 0.2 }, p: { fill: '#87698f', size: 18.5, space: 1 }, i: { fill: '#484646', size: 17.5, space: 0 } };
const MAP_FONT = "'Noto Sans', 'Noto Sans CJK SC', 'Noto Sans CJK KR', 'DejaVu Sans', sans-serif";
const isHan = (t) => /[\u3400-\u9fff\uac00-\ud7af]/.test(t);

const MapArt = styled.svg`width: 100%; height: 100%;`;
const Terrain = () => (
  <MapArt viewBox="204.8 760 1742.4 800" preserveAspectRatio="none">
    <defs><clipPath id="landClip"><path d={MAP.land} /></clipPath></defs>
    <rect x="200" y="755" width="1760" height="815" fill="#b2d2dd" />
    <path d={MAP.land} fill="#f2efea" stroke="#a9cbd8" strokeWidth="1" />
    <g clipPath="url(#landClip)" fill="none" strokeLinejoin="round">
      <path d={MAP.mesh} stroke="#dbcddb" strokeWidth="1.4" />
      <path d={MAP.provinces} stroke="#d0c0d2" strokeWidth="1.6" />
      <path d={MAP.lakes} fill="#b2d2dd" />
      {PONDS.map(([x, y, r], i) => <ellipse key={i} cx={x} cy={y} rx={r} ry={r * 0.6} fill="#b2d2dd" />)}
      <path d={MAP.borders} stroke="#bda9c1" strokeWidth="2.6" />
    </g>
    <path d={MAP.sea} fill="none" stroke="#9b9cb9" strokeWidth="2" opacity="0.8" />
    {ATOLLS.map(([x, y], i) => <circle key={i} cx={x} cy={y} r={4.6} fill="none" stroke="#9b9cb9" strokeWidth="1.6" />)}
    <path d="M430.8 760V1560M840 760V1560M1249.3 760V1560M1659 760V1560" stroke="#fff" strokeWidth="1" opacity="0.35" />
    <path d="M204 1125H1948" stroke="#fff" strokeWidth="2" opacity="0.85" />
    <path d="M204 1534.5H1948" stroke="#fff" strokeWidth="1.2" opacity="0.9" />
    {DOTS.map(([x, y], i) => <circle key={i} cx={x} cy={y} r="2.8" fill="#fff" stroke="#8a8880" strokeWidth="1.3" />)}
    {CAPITALS.map(([x, y], i) => (
      <g key={i}><circle cx={x} cy={y} r="4.4" fill="#e8e6df" stroke="#5f5d59" strokeWidth="1.4" /><circle cx={x} cy={y} r="1.9" fill="#5f5d59" /></g>
    ))}
    {LABELS.map(([f, kind, t, lx, ly], i) => {
      const [[x, y]] = f(`${lx},${ly}`);
      const st = LABEL_STYLE[kind];
      return (
        <text key={i} x={x} y={y + 6.5} textAnchor="middle" fontFamily={MAP_FONT} fontSize={isHan(t) ? 17.3 : st.size}
          letterSpacing={/[a-z]/i.test(t) ? st.space : 0} fontStyle={kind === 'i' ? 'italic' : 'normal'}
          fill={st.fill} stroke="#fff" strokeOpacity="0.75" strokeWidth="3" paintOrder="stroke" strokeLinejoin="round">{t}</text>
      );
    })}
  </MapArt>
);

const HUES = { g: '#5fc26b', y: '#e2b53d', o: '#e97d34', r: '#dd524c' };
const MARKERS = [
  ['r', 460, 215], ['o', 516, 240], ['o', 386, 382], ['o', 395, 390], ['g', 512, 412], ['y', 525, 423], ['o', 890, 457], ['y', 563, 563],
  ['r', 362, 573], ['g', 385, 577], ['g', 562, 582], ['y', 618, 585], ['g', 635, 587], ['g', 487, 600], ['r', 1079, 605], ['y', 430, 610],
  ['r', 1072, 615], ['g', 218, 625], ['g', 400, 639], ['g', 760, 640], ['r', 745, 678], ['o', 684, 722], ['r', 702, 727], ['g', 728, 733],
  ['o', 722, 745], ['o', 938, 765], ['r', 924, 778], ['r', 304, 803], ['g', 611, 912], ['r', 668, 1007], ['o', 655, 1009], ['r', 448, 1230],
  ['r', 470, 1317], ['y', 467, 1331], ['o', 410, 1340],
];
const Marker = styled.span`
  position: absolute; left: ${(p) => p.$x}px; top: ${(p) => p.$y}px; width: 49px; height: 49px; margin: -24.5px 0 0 -24.5px;
  border-radius: 50%; border: 4.7px solid #fff; background: ${(p) => p.$c};
  display: flex; align-items: center; justify-content: center;
  &::after { content: ''; width: 26px; height: 26px; border-radius: 50%; background: rgba(255, 255, 255, 0.5); }
`;
const MapView = styled.div`
  position: relative; height: 800px; border-radius: 0.5rem; overflow: hidden; background: #b2d2dd;
`;
const MapShadow = styled.div`
  border-radius: 0.5rem;
  box-shadow: 0 16px 24px -4.8px rgba(0, 0, 0, 0.13), 0 6.4px 9.6px -6.4px rgba(0, 0, 0, 0.13);
`;
const ZoomBox = styled.div`
  position: absolute; left: 16px; top: 16px; width: 54.4px; border: 3.2px solid rgba(0, 0, 0, 0.22); border-radius: 6.4px;
  background: #fff; background-clip: padding-box;
`;
const ZoomKey = styled.div`
  height: 48px; padding-top: 14px; display: flex; align-items: center; justify-content: center; color: #000;
  font: 700 35px/1 'Liberation Mono', monospace;
  & + & { border-top: 1.6px solid #ccc; }
`;
const Attribution = styled.div`
  position: absolute; right: 0; bottom: 0; height: 27px; padding: 0 8px; background: rgba(255, 255, 255, 0.82); white-space: nowrap;
  display: flex; align-items: center; gap: 5.2px; font: 19.5px 'Liberation Sans', Arial, sans-serif; color: #333;
  a { color: #2f71a3; }
`;
const Flag = () => <svg width="19.2" height="12.8" viewBox="0 0 12 8"><path fill="#4c7be1" d="M0 0h12v4H0z" /><path fill="#ffd500" d="M0 4h12v3H0z" /><path fill="#e0bc00" d="M0 7h12v1H0z" /></svg>;

/* ---------- dashboard ---------- */

const Body = styled.div`flex: 1; display: flex; min-height: 0; background: #f9fafc;`;
const Sidebar = styled.nav`
  width: 5rem; flex: none; background: linear-gradient(#285330, #111827); padding: 1rem;
  display: flex; flex-direction: column; align-items: center; gap: 0.25rem;
`;
const Brand = styled.div`height: 4.75rem; color: #6edb8a;`;
const NavItem = styled.a`
  width: 3rem; height: 3rem; border-radius: 0.5rem; display: flex; align-items: center; justify-content: center;
  color: ${(p) => (p.$active ? '#fff' : '#9ca3af')}; background: ${(p) => (p.$active ? '#2f6638' : 'transparent')};
`;
const Main = styled.main`flex: 1; padding: 2rem; min-width: 0; overflow: hidden;`;
const Title = styled.h1`font-size: 1.875rem; line-height: 2.25rem; font-weight: 700; color: #111827;`;
const Subtitle = styled.p`
  margin-top: 0.25rem; font-size: 0.875rem; line-height: 1.25rem; color: #4b5563; white-space: nowrap;
  span { margin-right: 1.5px; }
`;
const Card = styled.section`
  background: #fff; border-radius: 0.5rem; padding: ${(p) => p.$pad || '1rem'};
  box-shadow: 0 6.4px 9.6px -1.6px rgba(0, 0, 0, 0.1), 0 3.2px 6.4px -3.2px rgba(0, 0, 0, 0.12);
`;
const Stats = styled.div`display: grid; grid-template-columns: repeat(6, 1fr); gap: 1.25rem; margin: 1.5rem 0 2rem;`;
const StatCard = styled(Card)`display: flex; align-items: center; justify-content: space-between;`;
const StatLabel = styled.p`font-size: 0.875rem; line-height: 1.25rem; font-weight: 500; color: #4b5563;`;
const StatRow = styled.div`display: flex; align-items: center; gap: 0.7rem; margin-top: 0.5rem; height: 2.25rem;`;
const StatValue = styled.span`font-size: 1.875rem; line-height: 2.25rem; font-weight: 700; color: #111827;`;
const Change = styled.span`
  display: flex; align-items: center; gap: 6px; padding-top: 8px;
  font-size: 0.875rem; line-height: 1.25rem; font-weight: 500; color: #4ba352; white-space: nowrap;
`;
const Bubble = styled.span`
  width: 3.5rem; height: 3.5rem; border-radius: 50%; flex: none; display: flex; align-items: center; justify-content: center;
  background: ${(p) => p.$bg}; color: ${(p) => p.$fg};
`;
const MapRow = styled.div`display: grid; grid-template-columns: repeat(3, 1fr); gap: 1.5rem; align-items: start; margin-bottom: 2rem;`;
const MapCard = styled(Card)`grid-column: span 2;`;
const CardTitle = styled.h2`font-size: 1.125rem; line-height: 1.75rem; font-weight: 600; color: #111827;`;
const MapTitle = styled(CardTitle)`margin-bottom: 1rem;`;
const Column = styled.div`display: flex; flex-direction: column; gap: ${(p) => p.$gap};`;
const SmallTitle = styled.h3`font-size: 0.875rem; line-height: 1.25rem; font-weight: 600; color: #111827; margin-bottom: 0.75rem;`;
const LegendItem = styled.div`display: flex; align-items: center; gap: 0.5rem; font-size: 0.875rem; line-height: 1.25rem; color: #374151;`;
const LegendDot = styled.span`
  width: 1rem; height: 1rem; border-radius: 50%; border: 3.2px solid #fff; background: ${(p) => p.$c};
  box-shadow: 0 1.6px 4.8px rgba(0, 0, 0, 0.14);
`;
const HealthRow = styled.div`
  display: flex; justify-content: space-between; font-size: 0.875rem; line-height: 1.25rem; color: #4b5563;
  b { font-weight: 600; color: ${(p) => p.$c}; }
`;
const BottomRow = styled.div`display: grid; grid-template-columns: 1fr 1fr; gap: 1.5rem;`;
const CardHead = styled.div`display: flex; align-items: center; justify-content: space-between; margin-bottom: 1rem;`;
const ViewAll = styled.a`display: flex; align-items: center; gap: 6.5px; font-size: 0.875rem; font-weight: 500; color: #4ba352;`;
const Alert = styled.div`
  display: flex; gap: 0.75rem; padding: 1rem; border-left: 6.4px solid #e77a76; border-radius: 0.5rem;
  background: #f9e3e2; height: 8rem; color: #7b2321;
`;
const AlertHead = styled.div`display: flex; align-items: center; gap: 0.5rem; height: 1.25rem;`;
const AlertTitle = styled.span`font-size: 0.875rem; font-weight: 600; color: #7b2321;`;
const Badge = styled.span`
  font-size: 0.75rem; line-height: 1rem; font-weight: 500; padding: 0.125rem 0.5rem; border-radius: 0.25rem;
  color: #902a26; background: ${(p) => p.$bg || 'transparent'};
`;
const AreaText = styled.p`margin-top: 0.25rem; font-size: 0.75rem; line-height: 1rem; color: #374151; b { font-weight: 600; }`;
const Meta = styled.div`
  margin-top: ${(p) => p.$mt}; display: flex; align-items: center; gap: 12.2px; font-size: 0.75rem; line-height: 1rem; color: #4b5563;
`;
const Activity = styled.div`display: flex; gap: 0.75rem; align-items: flex-start;`;
const Rail = styled.div`display: flex; flex-direction: column; align-items: center; width: 2rem;`;
const RailDot = styled.span`
  width: 2rem; height: 2rem; border-radius: 50%; background: #5fc26b; color: #fff; display: flex; align-items: center; justify-content: center;
`;
const RailLine = styled.span`width: 3.2px; height: 1rem; margin: 0.5rem 0; background: #e5e7eb;`;
const ActText = styled.p`flex: 1; padding-top: 0.375rem; font-size: 0.875rem; line-height: 1.25rem; color: #111827;`;
const ActDate = styled.span`padding-top: 0.375rem; font-size: 0.75rem; line-height: 1rem; color: #6b7280;`;

const BrandIcon = () => (
  <svg width="51.2" height="51.2" viewBox="0 0 24 24" fill="none" stroke="currentColor" strokeWidth="2" strokeLinecap="round" strokeLinejoin="round">
    <path d="M4 16l4.586-4.586a2 2 0 012.828 0L16 16m-2-2l1.586-1.586a2 2 0 012.828 0L20 14m-6-6h.01M6 20h12a2 2 0 002-2V6a2 2 0 00-2-2H6a2 2 0 00-2 2v12a2 2 0 002 2z" />
  </svg>
);
const TrendArrow = ({ down }) => (
  <svg width="18" height="22" viewBox="0 0 18 22" fill="none" stroke="currentColor" strokeWidth="1.6">
    <path d={down ? 'M9 1V21M1 12.5Q6.500 15.500 9 20.500Q11.500 15.500 17 12.500' : 'M9 21V1M1 9.500Q6.500 6.500 9 1.500Q11.500 6.500 17 9.500'} />
  </svg>
);
const NextArrow = () => (
  <svg width="24" height="14" viewBox="0 0 24 14" fill="none" stroke="currentColor" strokeWidth="1.6"><path d="M0 7H23M16 1Q18.500 5.500 23 7Q18.500 8.500 16 13" /></svg>
);
const NAV = [HiOutlineHome, HiOutlinePhoto, HiOutlineExclamationTriangle, HiOutlineChartBar, HiOutlineMapPin];
const STATS = [
  { label: 'Total Images', value: '50', change: '12%', Icon: HiOutlinePhoto, bg: '#dde8fb', fg: '#3763e2' },
  { label: 'Healthy Crops', value: '16', change: '8%', Icon: HiOutlineCheckCircle, bg: '#e1fae7', fg: '#4ba352' },
  { label: 'Damage Alerts', value: '34', down: true, change: '5%', Icon: HiOutlineExclamationTriangle, bg: '#f9e3e2', fg: '#cd3b32' },
  { label: 'Pending Reviews', value: '20', Icon: HiOutlineClock, bg: '#fdf8c9', fg: '#c28b2c' },
  { label: 'Total Farmers', value: '42', change: '15%', Icon: HiOutlineUserGroup, bg: '#f1e8fe', fg: '#8738e2' },
  { label: 'Coverage Area', value: '125 ha', Icon: HiOutlineMap, bg: '#dde8fb', fg: '#3763e2' },
];
const LEGEND = [['Healthy', HUES.g], ['Stressed', HUES.y], ['Damaged', HUES.o], ['Critical', HUES.r]];
const ACTIVITY = [
  ['Ravi Desai uploaded almond image from Raipur', 'Oct 03, 21:31'],
  ['Ramesh Kumar uploaded almond image from Dewas', 'Oct 16, 21:31'],
];

export default function App() {
  return (
    <Screen>
      <Global />
      <Browser />
      <Body>
        <Sidebar>
          <Brand><BrandIcon /></Brand>
          {NAV.map((Icon, i) => <NavItem key={i} $active={i === 0}><Icon size={38.4} /></NavItem>)}
        </Sidebar>
        <Main>
          <Title>Krishi Sanrakshan Dashboard</Title>
          <Subtitle><span>कृषि संरक्षण</span> - Real-time crop monitoring and analytics for PMFBY</Subtitle>
          <Stats>
            {STATS.map(({ label, value, down, change, Icon, bg, fg }) => (
              <StatCard key={label} $pad="1.5rem">
                <div>
                  <StatLabel>{label}</StatLabel>
                  <StatRow>
                    <StatValue>{value}</StatValue>
                    {change && <Change><TrendArrow down={down} />{change}</Change>}
                  </StatRow>
                </div>
                <Bubble $bg={bg} $fg={fg}><Icon size={51.2} /></Bubble>
              </StatCard>
            ))}
          </Stats>
          <MapRow>
            <MapCard>
              <MapTitle>Crop Locations Map</MapTitle>
              <MapShadow>
                <MapView>
                  <Terrain />
                  {MARKERS.map(([c, x, y], i) => <Marker key={i} $c={HUES[c]} $x={x / 3 + 655.2} $y={y / 3 + 140} />)}
                  <ZoomBox><ZoomKey>+</ZoomKey><ZoomKey>−</ZoomKey></ZoomBox>
                  <Attribution><Flag /><a>Leaflet</a><span>|</span><span>©</span><a>OpenStreetMap</a><span>contributors</span></Attribution>
                </MapView>
              </MapShadow>
            </MapCard>
            <Column $gap="1.5rem">
              <Card>
                <SmallTitle>Map Legend</SmallTitle>
                <Column $gap="0.5rem">
                  {LEGEND.map(([name, c]) => <LegendItem key={name}><LegendDot $c={c} />{name}</LegendItem>)}
                </Column>
              </Card>
              <Card>
                <SmallTitle>Health Distribution</SmallTitle>
                <Column $gap="0.75rem">
                  <HealthRow $c="#4ba352"><span>Healthy</span><b>32%</b></HealthRow>
                  <HealthRow $c="#c28b2c"><span>At Risk</span><b>68%</b></HealthRow>
                </Column>
              </Card>
            </Column>
          </MapRow>
          <BottomRow>
            <Card $pad="1.5rem">
              <CardHead><CardTitle>Recent Damage Alerts</CardTitle><ViewAll>View all<NextArrow /></ViewAll></CardHead>
              <Alert>
                <HiOutlineExclamationTriangle size={38.4} />
                <div>
                  <AlertHead><AlertTitle>Flood Inundation</AlertTitle><Badge $bg="#f5cac9">critical</Badge><Badge>rejected</Badge></AlertHead>
                  <AreaText>Affected Area: <b>3.3529034264036435 hectares</b></AreaText>
                  <Meta $mt="0.5rem"><HiOutlineMapPin size={19.2} />Gharaunda, Karnal</Meta>
                  <Meta $mt="0.25rem"><HiOutlineClock size={19.2} />Reported Oct 25, 2025 21:31</Meta>
                </div>
              </Alert>
            </Card>
            <Card $pad="1.5rem">
              <CardHead><CardTitle>Recent Activity</CardTitle></CardHead>
              {ACTIVITY.map(([text, when]) => (
                <Activity key={text}>
                  <Rail><RailDot><HiOutlinePhoto size={25.6} /></RailDot><RailLine /></Rail>
                  <ActText>{text}</ActText>
                  <ActDate>{when}</ActDate>
                </Activity>
              ))}
            </Card>
          </BottomRow>
        </Main>
      </Body>
    </Screen>
  );
}
